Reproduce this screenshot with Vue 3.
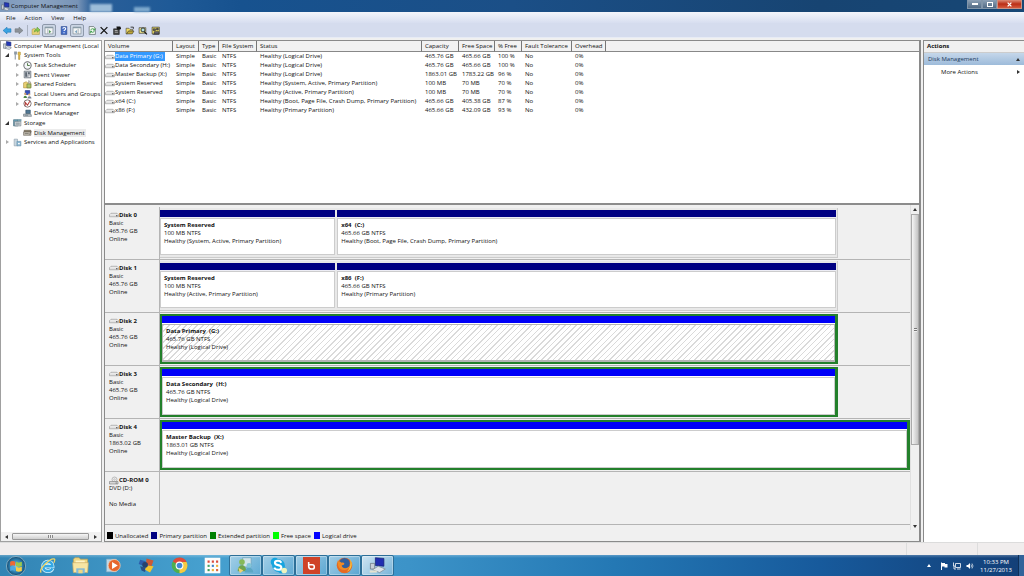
<script setup>
const icons = {
  computer: '<path d="M6 1l8 1v7l-8-1z" fill="#2438b8" stroke="#10206a"/><path d="M1 5h4v8H1z" fill="#cfd6dd" stroke="#5a6570"/><path d="M4 13l4-3 7 2-4 3z" fill="#dfe5ea" stroke="#6b7680"/>',
  tools: '<path d="M4 1v14M3 1v4h3V1" stroke="#8d99a5" stroke-width="2" fill="none"/><path d="M9 2h4v5l-1 1v7h-2V8L9 7z" fill="#e6c14a" stroke="#a98624"/>',
  clock: '<circle cx="8" cy="8" r="6.5" fill="#f4f6f8" stroke="#6d6f73" stroke-width="1.8"/><path d="M8 4v4h4" stroke="#39682c" stroke-width="1.5" fill="none"/>',
  event: '<path d="M2 2h12v12H2z" fill="#b9bec5" stroke="#545b64"/><path d="M4 4h3v8H4zM9 4h3v3H9z" fill="#59636d"/><path d="M9 9h4v4H9z" fill="#fff" stroke="#747b84"/>',
  folder: '<path d="M1 5l5-2 2 2h6v9H1z" fill="#e8cf72" stroke="#a98d3c"/><path d="M7 7h7v7H7z" fill="#a9c26c" stroke="#62762f"/><path d="M10 1l3 2v3h-3z" fill="#ddd" stroke="#888"/>',
  users: '<path d="M4 1h8v7H4z" fill="#3550bd" stroke="#162a78"/><circle cx="4" cy="7" r="2" fill="#d0a16e"/><path d="M1 14c0-5 6-5 6 0z" fill="#4c8742"/><circle cx="11" cy="8" r="2" fill="#e0b583"/><path d="M8 15c0-5 7-5 7 0z" fill="#788495"/>',
  perf: '<circle cx="8" cy="8" r="6.5" fill="#fff" stroke="#7b6c6c" stroke-width="1.6"/><path d="M4 12V6l4 5 4-7" stroke="#b33b35" stroke-width="1.8" fill="none"/>',
  device: '<path d="M5 2h8v6H5z" fill="#4f7693" stroke="#29475d"/><path d="M1 9h13l1 4H1z" fill="#c5ccd1" stroke="#59646c"/><path d="M3 11h6" stroke="#465660"/>',
  storage: '<path d="M1 3h8v11H1z" fill="#6ba3b8" stroke="#345f72"/><path d="M3 6h11v8H3z" fill="#d7dde1" stroke="#64707a"/><path d="M9 2h6v4H9z" fill="#789fac"/><path d="M5 9h7M5 11h7" stroke="#586771"/>',
  disk: '<path d="M2 4h12v3H2z" fill="#8e8069" stroke="#5e5446"/><path d="M1 7h13v6H1z" fill="#c7c2b7" stroke="#625b50"/><path d="M3 10h7M11 12l4-6" stroke="#4c4740"/>',
  services: '<path d="M2 2h6v12H2z" fill="#c8d6df" stroke="#8999a5"/><path d="M7 6h7v8H7z" fill="#8eb8d2" stroke="#5f8daa"/><path d="M9 9h3v2H9z" fill="#fff"/>',
  back: '<path d="M1 8l7-6v3h7v6H8v3z" fill="#39a3e2" stroke="#1d76b2"/>',
  forward: '<path d="M15 8L8 2v3H1v6h7v3z" fill="#8d9298" stroke="#6f757b"/>',
  up: '<path d="M1 6l5-2 2 2h6v9H1z" fill="#e8d278" stroke="#ab9640"/><path d="M5 11c0-4 2-6 5-6V2l5 5-5 4V8c-2 0-3 1-5 3z" fill="#8acb51" stroke="#5b9733"/>',
  pane: '<path d="M1 2h14v12H1z" fill="#f3f5f6" stroke="#73818a"/><path d="M1 3h14" stroke="#8094a2" stroke-width="2"/><path d="M6 5v9" stroke="#73818a"/><path d="M8 7l4 3-4 3z" fill="#569b57"/>',
  pane2: '<path d="M1 2h14v12H1z" fill="#f3f5f6" stroke="#73818a"/><path d="M1 3h14" stroke="#8094a2" stroke-width="2"/><path d="M10 5v9" stroke="#73818a"/><path d="M8 7l-4 3 4 3z" fill="#7ca4be"/>',
  help: '<path d="M3 1h10v14H3z" fill="#426bc7" stroke="#213d83"/><path d="M6 5c0-3 5-3 5 0 0 2-3 2-3 4M8 11v2" stroke="#fff" stroke-width="2" fill="none"/>',
  refresh: '<path d="M3 1h8l3 3v11H3z" fill="#f7faf6" stroke="#344"/><path d="M6 8c0-4 5-4 6-1M12 8c0 4-5 4-6 1M10 7h3V4M8 10H5v3" stroke="#279238" stroke-width="1.5" fill="none"/>',
  close: '<path d="M2 2l12 12M14 2L2 14" stroke="#111" stroke-width="2.3"/>',
  props: '<path d="M2 5h10v10H2z" fill="#444" stroke="#111"/><path d="M4 8h5M4 11h6" stroke="#fff"/><path d="M7 1h7v5H8z" fill="#151515"/><path d="M11 4h4" stroke="#111" stroke-width="3"/>',
  open: '<path d="M1 4h5l2 2h5v3H6l-3 5H1z" fill="#eed962" stroke="#333"/><path d="M5 9h10l-3 5H2z" fill="#c2a936" stroke="#333"/><path d="M9 2h5v3" fill="none" stroke="#222" stroke-width="1.5"/>',
  find: '<path d="M1 3h12v10H1z" fill="#efe58a" stroke="#222"/><circle cx="8" cy="7" r="3.5" fill="#b3e1e2" stroke="#222" stroke-width="1.5"/><path d="M10 10l5 5" stroke="#111" stroke-width="2"/>',
  settings: '<path d="M1 2h13v12H1z" fill="#e8da68" stroke="#222"/><path d="M3 5h4v3H3zM9 4h3v3H9zM5 10h8v4H5z" fill="#667" stroke="#222"/><path d="M2 15h12" stroke="#222"/>',
  drive: '<path d="M1 5l3-3h12l3 3v4H1z" fill="#dedede" stroke="#888"/><path d="M2 5h16" stroke="#fff"/><path d="M14 7h3" stroke="#444" stroke-width="2"/>',
  cd: '<circle cx="11" cy="6" r="5" fill="#ededed" stroke="#888"/><circle cx="11" cy="6" r="1.5" fill="#fff" stroke="#999"/><path d="M1 10h17v5H1z" fill="#d7d7d7" stroke="#666"/><path d="M13 13h3" stroke="#333"/>',
  start: '<defs><radialGradient id="orb"><stop offset="0" stop-color="#8bd0e6"/><stop offset=".65" stop-color="#2d7fae"/><stop offset="1" stop-color="#174a70"/></radialGradient></defs><circle cx="12" cy="12" r="11.5" fill="url(#orb)" stroke="#8eb4c7"/><path d="M5 7q3-2 6 0v5q-3-2-6 0z" fill="#ef6834"/><path d="M12 7q3 2 7 0v5q-4 2-7 0z" fill="#9cc94b"/><path d="M5 13q3-2 6 0v5q-3-2-6 0z" fill="#4fa9e3"/><path d="M12 13q3 2 7 0v5q-4 2-7 0z" fill="#f8cd46"/>',
  ie: '<path d="M19 16c-3 6-13 5-13-3S19 4 19 13H7" fill="none" stroke="#d5f4ff" stroke-width="5.5"/><path d="M19 16c-3 6-13 5-13-3S19 4 19 13H7" fill="none" stroke="#35a8e4" stroke-width="3.4"/><path d="M3 22C-1 17 17 0 22 3c1 1 0 3-1 5" fill="none" stroke="#f2d563" stroke-width="1.8"/>',
  explorer: '<path d="M2 3l2-2h6l2 2h10v16H2z" fill="#efd783" stroke="#c0a255"/><path d="M5 5h13v7H5z" fill="#fff5c9"/><path d="M1 8h22l-1 14H2z" fill="#f7e5a3" stroke="#cfb066"/><path d="M6 16h12v7H6z" fill="#84bad7"/><path d="M9 18h6v5H9z" fill="#efd783"/>',
  media: '<path d="M2 3h14v18H2z" fill="#b8d8ea" stroke="#7ca7c1"/><circle cx="13" cy="12" r="8.5" fill="#e7662d" stroke="#f6d2b5"/><path d="M10 7l8 5-8 5z" fill="#fff"/>',
  xp: '<path d="M3 4l8 2-2 7-8-3z" fill="#2d5cab"/><path d="M12 2l10 3-3 8-8-2z" fill="#c95a38"/><path d="M3 13l8 2-1 6-5-2z" fill="#284f86"/><path d="M12 12l10 1-5 9-7-4z" fill="#f4c52e"/><circle cx="10" cy="11" r="4" fill="#26426f"/>',
  chrome: '<circle cx="12" cy="12" r="11" fill="#4daf50"/><path d="M12 12L2.5 6.5A11 11 0 0 1 22 7H12z" fill="#df4b3b"/><path d="M12 12l5-5h5a11 11 0 0 1-10 16z" fill="#f6ca42"/><circle cx="12" cy="12" r="5.5" fill="#fff"/><circle cx="12" cy="12" r="4" fill="#4189d5"/>',
  apps: '<path d="M1 1h22v22H1z" fill="#fcfcfb"/><path d="M5 5h3v3H5zM11 5h3v3h-3zM17 5h3v3h-3z" fill="#da4b3e"/><path d="M5 11h3v3H5z" fill="#43a566"/><path d="M11 11h3v3h-3z" fill="#3d80ca"/><path d="M17 11h3v3h-3z" fill="#edb33b"/><path d="M5 17h3v3H5z" fill="#3c9b59"/><path d="M11 17h3v3h-3z" fill="#edb33b"/><path d="M17 17h3v3h-3z" fill="#dc6540"/>',
  people: '<path d="M8 1h12v13H8z" fill="#cfe3ea" stroke="#6a9fb7"/><circle cx="7" cy="7" r="4" fill="#86b95a"/><path d="M1 20c0-11 12-11 12 0z" fill="#6fa54e"/><circle cx="17" cy="12" r="3.5" fill="#82c5d9"/><path d="M11 22c0-9 12-9 12 0z" fill="#5ba7c4"/><path d="M2 15l7 4-5 4z" fill="#f0d071"/>',
  skype: '<circle cx="12" cy="12" r="9" fill="#16a5df"/><circle cx="7" cy="7" r="6" fill="#16a5df"/><circle cx="16" cy="17" r="6" fill="#16a5df"/><path d="M16 8c-2-4-9-3-9 0 0 5 9 2 9 7 0 4-8 4-10 0" fill="none" stroke="#fff" stroke-width="3"/><circle cx="20" cy="19" r="4" fill="#edf4be"/>',
  beats: '<path d="M0 0h24v24H0z" fill="#cf4227"/><path d="M8 7v6a4 4 0 0 0 4 4h1a3 3 0 0 0 0-6H9" fill="none" stroke="#fff" stroke-width="2.2"/>',
  firefox: '<circle cx="12" cy="12" r="11" fill="#e66a22"/><circle cx="12" cy="9" r="7.5" fill="#315f9e"/><path d="M2 5c2 2 4 1 6 3 3-1 5 1 3 3l-3 1c1 5 8 5 12 0-1 8-15 9-17 0z" fill="#f18a25"/><path d="M20 3c5 7 1 16-5 18 5-5 6-10 5-18" fill="#f6c43f"/>',
  management: '<path d="M9 1l12 1v11l-12-1z" fill="#202eb1" stroke="#111e71"/><path d="M2 9h6v8H2z" fill="#c8d0d8" stroke="#66717a"/><path d="M5 18l8-5 10 4-8 5z" fill="#dde4e8" stroke="#7c8891"/><path d="M1 19h10v3H1z" fill="#e4e2cf"/>',
  flag: '<path d="M3 1v15" stroke="#fff" stroke-width="2"/><path d="M4 2h6v2h5v7H9V9H4z" fill="#fff"/>',
  network: '<path d="M5 3h10v8H5z" fill="none" stroke="#fff" stroke-width="1.6"/><path d="M8 14h7M1 1v7h3M2 8v6h4" stroke="#fff" stroke-width="1.6" fill="none"/>',
  sound: '<path d="M1 6h3l4-4v12l-4-4H1z" fill="#fff"/><path d="M10 5q2 3 0 6M12 3q4 5 0 10" fill="none" stroke="#fff" stroke-width="1.3"/>'
}

const tools = [
  { n: 'back', t: 'Back' }, { n: 'forward', t: 'Forward' }, { sep: true },
  { n: 'up', t: 'Up one level' }, { n: 'pane', t: 'Console tree', on: true },
  { n: 'help', t: 'Help', gap: true }, { n: 'pane2', t: 'Action pane', on: true },
  { n: 'refresh', t: 'Refresh', gap: true }, { n: 'close', t: 'Delete' }, { n: 'props', t: 'Properties', wide: true },
  { n: 'open', t: 'Open', wide: true }, { n: 'find', t: 'Find', wide: true }, { n: 'settings', t: 'Settings', wide: true }
]
const tree = [
  { l: 0, i: 'computer', t: 'Computer Management (Local' },
  { l: 1, i: 'tools', t: 'System Tools', e: 'open' },
  { l: 2, i: 'clock', t: 'Task Scheduler', e: 'shut' },
  { l: 2, i: 'event', t: 'Event Viewer', e: 'shut' },
  { l: 2, i: 'folder', t: 'Shared Folders', e: 'shut' },
  { l: 2, i: 'users', t: 'Local Users and Groups', e: 'shut' },
  { l: 2, i: 'perf', t: 'Performance', e: 'shut' },
  { l: 2, i: 'device', t: 'Device Manager' },
  { l: 1, i: 'storage', t: 'Storage', e: 'open' },
  { l: 2, i: 'disk', t: 'Disk Management', sel: true },
  { l: 1, i: 'services', t: 'Services and Applications', e: 'shut' }
]
const columns = ['Volume', 'Layout', 'Type', 'File System', 'Status', 'Capacity', 'Free Space', '% Free', 'Fault Tolerance', 'Overhead']
const volumes = [
  ['Data Primary (G:)', 'Healthy (Logical Drive)', '465.76 GB', '465.66 GB', '100 %'],
  ['Data Secondary (H:)', 'Healthy (Logical Drive)', '465.76 GB', '465.66 GB', '100 %'],
  ['Master Backup (X:)', 'Healthy (Logical Drive)', '1863.01 GB', '1783.22 GB', '96 %'],
  ['System Reserved', 'Healthy (System, Active, Primary Partition)', '100 MB', '70 MB', '70 %'],
  ['System Reserved', 'Healthy (Active, Primary Partition)', '100 MB', '70 MB', '70 %'],
  ['x64 (C:)', 'Healthy (Boot, Page File, Crash Dump, Primary Partition)', '465.66 GB', '405.38 GB', '87 %'],
  ['x86 (F:)', 'Healthy (Primary Partition)', '465.66 GB', '432.09 GB', '93 %']
]
const disks = [
  { n: 'Disk 0', lines: ['Basic', '465.76 GB', 'Online'], w: 90.4, parts: [
    { g: 176, t: 'System Reserved', s: '100 MB NTFS', h: 'Healthy (System, Active, Primary Partition)' },
    { g: 501, t: 'x64  (C:)', s: '465.66 GB NTFS', h: 'Healthy (Boot, Page File, Crash Dump, Primary Partition)' }] },
  { n: 'Disk 1', lines: ['Basic', '465.76 GB', 'Online'], w: 90.4, parts: [
    { g: 176, t: 'System Reserved', s: '100 MB NTFS', h: 'Healthy (Active, Primary Partition)' },
    { g: 501, t: 'x86  (F:)', s: '465.66 GB NTFS', h: 'Healthy (Primary Partition)' }] },
  { n: 'Disk 2', lines: ['Basic', '465.76 GB', 'Online'], w: 90.4, ext: true, parts: [
    { g: 1, sel: true, t: 'Data Primary  (G:)', s: '465.76 GB NTFS', h: 'Healthy (Logical Drive)' }] },
  { n: 'Disk 3', lines: ['Basic', '465.76 GB', 'Online'], w: 90.4, ext: true, parts: [
    { g: 1, t: 'Data Secondary  (H:)', s: '465.76 GB NTFS', h: 'Healthy (Logical Drive)' }] },
  { n: 'Disk 4', lines: ['Basic', '1863.02 GB', 'Online'], w: 100, ext: true, parts: [
    { g: 1, t: 'Master Backup  (X:)', s: '1863.01 GB NTFS', h: 'Healthy (Logical Drive)' }] },
  { n: 'CD-ROM 0', cd: true, lines: ['DVD (D:)', '\u00a0', 'No Media'], w: 0, parts: [] }
]
const legend = [['black', 'Unallocated'], ['navy', 'Primary partition'], ['green', 'Extended partition'], ['lime', 'Free space'], ['blue', 'Logical drive']]
const pins = [['ie', 'Internet Explorer'], ['explorer', 'Explorer'], ['media', 'Media Player'], ['xp', 'Windows tools'], ['chrome', 'Chrome'], ['apps', 'Apps'],
  ['people', 'Messenger', 1], ['skype', 'Skype', 1], ['beats', 'Music', 1], ['firefox', 'Firefox', 1], ['management', 'Computer Management', 1]]
</script>

<template>
  <div class="desktop">
    <header class="title">
      <svg class="ic" viewBox="0 0 16 16" v-html="icons.computer"></svg>
      <span>Computer Management</span>
      <i class="glow"></i><i class="glow small"></i>
      <div class="winbtns">
        <button class="wb" aria-label="Minimize"><i class="min"></i></button>
        <button class="wb" aria-label="Maximize"><i class="max"></i></button>
        <button class="wb red" aria-label="Close"><svg viewBox="0 0 8 8"><path d="M1 1l6 6M7 1L1 7" stroke="#fff" stroke-width="2" /></svg></button>
      </div>
    </header>
    <nav class="menu"><button v-for="m in ['File', 'Action', 'View', 'Help']" :key="m">{{ m }}</button></nav>
    <div class="toolbar">
      <template v-for="(t, k) in tools" :key="k">
        <i v-if="t.sep" class="sep"></i>
        <button v-else :class="{ on: t.on, gap: t.gap, wide: t.wide }" :aria-label="t.t"><svg viewBox="0 0 16 16" v-html="icons[t.n]"></svg></button>
      </template>
    </div>

    <main class="main">
      <aside class="left">
        <ul class="tree">
          <li v-for="r in tree" :key="r.t" :class="'l' + r.l">
            <button v-if="r.l" class="exp" :class="r.e" :aria-label="'Toggle ' + r.t"></button>
            <svg class="ic" viewBox="0 0 16 16" v-html="icons[r.i]"></svg>
            <span :class="{ sel: r.sel }">{{ r.t }}</span>
          </li>
        </ul>
        <div class="hscroll"><i class="arr w"></i><div class="hthumb"><i></i></div><i class="arr e"></i></div>
      </aside>

      <section class="center">
        <div class="list">
          <table>
            <colgroup><col v-for="(c, k) in columns" :key="c" :class="'c' + k"><col></colgroup>
            <thead><tr><th v-for="c in columns" :key="c">{{ c }}</th><th class="rest"></th></tr></thead>
            <tbody>
              <tr v-for="(v, k) in volumes" :key="k" :class="{ picked: k === 0 }">
                <td class="vol"><div><svg viewBox="0 0 20 11" v-html="icons.drive"></svg><span>{{ v[0] }}</span></div></td>
                <td>Simple</td><td>Basic</td><td>NTFS</td><td>{{ v[1] }}</td><td>{{ v[2] }}</td><td>{{ v[3] }}</td><td>{{ v[4] }}</td><td>No</td><td>0%</td><td></td>
              </tr>
            </tbody>
          </table>
        </div>
        <div class="graph">
          <div class="disks">
            <div v-for="d in disks" :key="d.n" class="disk">
              <div class="label">
                <b><svg :class="{ cd: d.cd }" :viewBox="d.cd ? '0 0 20 16' : '0 0 20 11'" v-html="d.cd ? icons.cd : icons.drive"></svg>{{ d.n }}</b>
                <div v-for="(l, k) in d.lines" :key="k">{{ l }}</div>
              </div>
              <div class="track">
                <div v-if="d.parts.length" class="bar" :class="{ ext: d.ext }" :style="{ width: d.w + '%' }">
                  <div v-for="p in d.parts" :key="p.t" class="part" :style="{ flexGrow: p.g }">
                    <div class="cap"></div>
                    <div class="body" :class="{ hatch: p.sel }"><b>{{ p.t }}</b><div>{{ p.s }}</div><div>{{ p.h }}</div></div>
                  </div>
                </div>
              </div>
            </div>
          </div>
          <div class="vscroll"><i class="arr n"></i><div class="vthumb"><i></i></div><div class="space"></div><i class="arr s"></i></div>
        </div>
        <div class="legend"><span v-for="l in legend" :key="l[0]"><i :class="l[0]"></i>{{ l[1] }}</span></div>
      </section>

      <aside class="right">
        <h2>Actions</h2>
        <button class="group">Disk Management<i class="arr n"></i></button>
        <button class="more">More Actions<i class="arr e"></i></button>
      </aside>
    </main>

    <div class="status"><i></i><i></i></div>

    <footer class="taskbar">
      <button class="start" aria-label="Start"><svg viewBox="0 0 24 24" v-html="icons.start"></svg></button>
      <button v-for="p in pins" :key="p[0]" class="pin" :class="{ run: p[2], act: p[0] === 'management' }" :aria-label="p[1]"><svg viewBox="0 0 24 24" v-html="icons[p[0]]"></svg></button>
      <div class="tray">
        <i class="arr n"></i>
        <svg viewBox="0 0 16 16" v-html="icons.flag"></svg>
        <svg viewBox="0 0 16 16" v-html="icons.network"></svg>
        <svg viewBox="0 0 16 16" v-html="icons.sound"></svg>
        <div class="time"><div>10:33 PM</div><div>11/27/2013</div></div>
        <button class="peek" aria-label="Show desktop"></button>
      </div>
    </footer>
  </div>
</template>

<style>
html, body { margin: 0; background: #f0eeee; }
</style>
<style scoped>
* { box-sizing: border-box; }
.desktop { display: flex; flex-direction: column; min-height: 100vh; font: 6px/8px "Open Sans", "Noto Sans", sans-serif; color: #111; white-space: nowrap; overflow: hidden; }
button { font: inherit; color: inherit; border: 0; padding: 0; margin: 0; background: none; }
svg { display: block; flex: none; }
i { display: block; flex: none; }
.ic { width: 9px; height: 9px; }

.title { position: relative; display: flex; align-items: center; gap: 1px; height: 12px; padding-left: 1px; background: linear-gradient(90deg, #7f9abd 0, #8ba4c2 40px, #7793b6 78px, #2b5f99 92px, #1f5a97 170px, #17528f 240px, #1b4f87 50%, #174472 80%, #174775 100%); color: #111; }
.glow { position: absolute; left: 90px; top: 4px; width: 22px; height: 8px; background: #9dbdd9; filter: blur(1px); }
.glow.small { left: 134px; top: 7px; width: 16px; height: 5px; background: #7da9cd; }
.winbtns { display: flex; margin-left: auto; align-self: flex-start; padding-right: 2px; }
.wb { display: flex; align-items: center; justify-content: center; width: 15px; height: 9px; border: 1px solid #8195a9; border-top: 0; background: linear-gradient(#8ca0b5, #526b85); }
.wb.red { width: 25px; background: linear-gradient(#dd8c78, #bb2e16 50%, #d45a3e); border-color: #c89184; }
.wb svg { width: 5px; height: 5px; }
.min { width: 6px; height: 2px; background: #fff; }
.max { width: 6px; height: 5px; border: 1px solid #fff; }

.menu { display: flex; gap: 9px; height: 11px; padding-left: 6px; background: linear-gradient(#f3f5fb, #d7def0); align-items: center; }
.toolbar { display: flex; align-items: center; height: 15px; padding-left: 1px; background: #d5dcee; border-bottom: 1px solid #e7ebf5; }
.toolbar button { width: 12px; height: 13px; display: flex; align-items: center; justify-content: center; border: 1px solid transparent; }
.toolbar button.on { width: 14px; border-color: #8d98aa; background: #cbd5e4; border-radius: 2px; }
.toolbar button.gap { margin-left: 2px; }
.toolbar button.wide { width: 13px; }
.toolbar svg { width: 10px; height: 9px; }
.sep { width: 1px; height: 11px; margin: 0 2px; background: #a9b1c0; }

.main { flex: 1; display: flex; gap: 2px; padding-top: 2px; background: #f0f0f0; }
.left { width: 102px; flex: none; display: flex; flex-direction: column; background: #fff; border: 1px solid #a0a0a0; overflow: hidden; }
.tree { list-style: none; margin: 0; padding: 0; height: 106px; display: flex; flex-direction: column; }
.tree li { flex: 1; display: flex; align-items: center; gap: 2px; padding-left: 2px; min-height: 0; }
.tree li.l1 { padding-left: 3px; }
.tree li.l2 { padding-left: 13px; }
.tree span { padding-right: 1px; }
.tree .sel { background: #ececec; }
.exp { width: 7px; height: 7px; position: relative; }
.exp.open::before { content: ""; display: block; width: 0; height: 0; margin: 1px; border-left: 4px solid transparent; border-bottom: 4px solid #333; }
.exp.shut::before { content: ""; display: block; width: 0; height: 0; margin: 1px 2px; border: 2px solid transparent; border-left: 3px solid #aaa; }
.arr { width: 0; height: 0; border: 2px solid transparent; }
.arr.n { border-top: 0; border-bottom: 3px solid #333; }
.arr.s { border-bottom: 0; border-top: 3px solid #333; }
.arr.e { border-right: 0; border-left: 3px solid #333; }
.arr.w { border-left: 0; border-right: 3px solid #333; }
.hscroll { margin-top: auto; display: flex; align-items: center; height: 9px; padding: 0 4px; background: #f1f1f1; gap: 4px; }
.hthumb { width: 77px; height: 7px; border: 1px solid #999; border-radius: 1px; background: linear-gradient(#f6f6f6, #cfcfcf); display: flex; align-items: center; justify-content: center; }
.hthumb i { width: 5px; height: 3px; background: repeating-linear-gradient(90deg, #888 0 1px, #eee 1px 2px); }
.hscroll .e { margin-left: auto; }

.center { flex: 1; min-width: 0; display: flex; flex-direction: column; border: 1px solid #8a8a8a; border-width: 1px 2px 1px 1px; background: #f0f0f0; }
.list { height: 164px; background: #fff; border-bottom: 2px solid #8c8c8c; }
table { width: 100%; table-layout: fixed; border-collapse: separate; border-spacing: 0; }
th, td { padding: 0 0 0 3px; height: 9px; line-height: 9px; font-weight: 400; text-align: left; }
th { height: 11px; line-height: 10px; background: #f2f2f2; border-right: 1px solid #777; border-bottom: 1px solid #888; }
th.rest { border-right: 0; }
.c0 { width: 68px; } .c1 { width: 26px; } .c2 { width: 20px; } .c3 { width: 38px; } .c4 { width: 165px; }
.c5 { width: 37px; } .c6 { width: 36px; } .c7 { width: 27px; } .c8 { width: 50px; } .c9 { width: 34px; }
.vol { padding-left: 0; }
.vol div { display: flex; align-items: center; }
.vol svg { width: 10px; height: 6px; }
.picked .vol span { background: #3399ff; color: #fff; padding-right: 2px; }

.graph { flex: 1; display: flex; }
.disks { flex: 1; padding-top: 2px; min-width: 0; }
.disk { display: flex; height: 53px; border-bottom: 1px solid #b4b4b4; }
.label { width: 55px; flex: none; padding: 4px 0 0 4px; border-right: 1px solid #b4b4b4; }
.label b { display: flex; align-items: center; height: 8px; }
.label svg { width: 10px; height: 6px; }
.label svg.cd { height: 9px; }
.track { flex: 1; display: flex; align-items: stretch; padding: 1px 0; }
.bar { display: flex; gap: 2px; padding: 2px 1px 2px 0; border-right: 1px solid #ccc; border-bottom: 1px solid #ccc; background: #e8e8e8; }
.part { flex: 1 1 0; min-width: 0; display: flex; flex-direction: column; gap: 1px; background: #ececf4; }
.cap { height: 7px; background: #000082; }
.body { flex: 1; background-color: #fff; border: 1px solid #ccc; padding: 2px 0 0 3px; white-space: pre; overflow: hidden; }
.body b { display: block; }
.ext { border: 2px solid #23802b; border-right-width: 3px; padding: 0; background: #fff; }
.ext .part { background: #fff; }
.ext .cap { background: #0000f8; }
.hatch { background-image: repeating-linear-gradient(135deg, #dadada 0 1px, #fff 1px 4px); border: 1px solid #b5b5b5; border-bottom-width: 2px; }
.vscroll { width: 9px; flex: none; display: flex; flex-direction: column; align-items: center; padding: 3px 0 2px; border-left: 1px solid #e0e0e0; gap: 3px; }
.vthumb { flex: 230 1 0; width: 8px; border: 1px solid #aaa; background: linear-gradient(90deg, #f5f5f5, #c4c4c4); display: flex; align-items: center; justify-content: center; }
.vthumb i { width: 3px; height: 4px; background: repeating-linear-gradient(#777 0 1px, #eee 1px 2px); }
.space { flex: 74 1 0; }
.legend { height: 11px; display: flex; align-items: center; gap: 3px; padding-left: 2px; }
.legend span { display: flex; align-items: center; gap: 2px; }
.legend i { width: 6px; height: 7px; }
.black { background: #000; } .navy { background: #000080; } .green { background: #008000; } .lime { background: #00ff00; } .blue { background: #0000ff; }

.right { width: 101px; flex: none; display: flex; flex-direction: column; background: #fff; border-left: 1px solid #8a8a8a; border-top: 1px solid #8a8a8a; }
.right h2 { margin: 0; padding-left: 3px; height: 12px; line-height: 11px; font-size: 6px; background: #f0f0f0; border-bottom: 1px solid #ccc; }
.right button { display: flex; align-items: center; justify-content: space-between; height: 12px; padding: 0 4px; }
.right .group { background: linear-gradient(#c5d7ea, #9dbbda); color: #1e395b; }
.right .more { margin-top: 1px; padding-left: 17px; }

.status { height: 13px; display: flex; justify-content: flex-end; background: #f0eded; border-top: 1px solid #dcdcdc; }
.status i { width: 71px; border-left: 1px solid #ddd; }
.status i:last-child { width: 47px; }

.taskbar { height: 21px; display: flex; background: linear-gradient(rgba(255,255,255,.25), rgba(255,255,255,0) 3px), linear-gradient(90deg, #3284b4 0, #46a0cf 20%, #3c93c8 40%, #2478b4 60%, #175a9c 80%, #133f77 100%); }
.start { width: 31px; display: flex; align-items: center; justify-content: center; }
.start svg { width: 20px; height: 20px; }
.pin { width: 33px; display: flex; align-items: center; justify-content: center; }
.pin svg { width: 17px; height: 17px; }
.run { border: 1px solid #2d6f98; border-radius: 2px; background: linear-gradient(135deg, rgba(255,255,255,.5), rgba(255,255,255,.15)); box-shadow: inset 0 0 0 1px rgba(255,255,255,.3); }
.act { background: linear-gradient(135deg, rgba(255,255,255,.75), rgba(255,255,255,.3)); }
.tray { margin-left: auto; display: flex; align-items: center; gap: 5px; color: #fff; }
.tray svg { width: 8px; height: 8px; }
.tray .arr { border-bottom-color: #fff; margin-right: 4px; }
.time { text-align: center; width: 34px; }
.peek { align-self: stretch; width: 6px; border-left: 1px solid #0e2f58; background: #31639a; }
</style>
